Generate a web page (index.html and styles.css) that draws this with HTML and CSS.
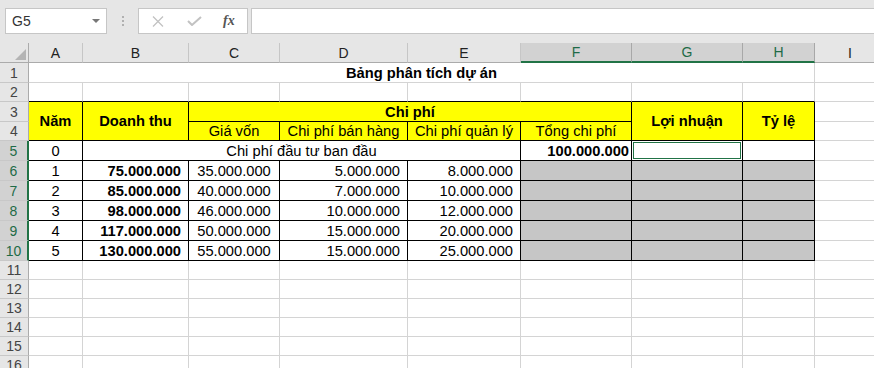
FILE: index.html
```html
<!DOCTYPE html>
<html lang="vi">
<head>
    <meta charset="UTF-8">
    <title>Bảng phân tích dự án</title>
    <link rel="stylesheet" href="styles.css">
</head>
<body>
    <div class="toolbar">
        <div class="namebox"><span>G5</span><span class="caret"></span></div>
        <div class="grip"><i></i><i></i><i></i></div>
        <div class="fxbtns">
            <svg class="icon" width="12" height="11" viewBox="0 0 12 11"><path d="M1 0.5L11 10.5M11 0.5L1 10.5" stroke="#c2c2c2" stroke-width="1.3" fill="none"/></svg>
            <svg class="icon" width="15" height="10" viewBox="0 0 15 10"><path d="M1 5L5 9L14 1" stroke="#c2c2c2" stroke-width="2" fill="none"/></svg>
            <span class="fx">fx</span>
        </div>
        <div class="formula"></div>
    </div>

    <div class="sheet">
        <!-- column headers -->
        <div class="c corner"><span class="tri"></span></div>
        <div class="c ch">A</div>
        <div class="c ch">B</div>
        <div class="c ch">C</div>
        <div class="c ch">D</div>
        <div class="c ch">E</div>
        <div class="c ch sel">F</div>
        <div class="c ch sel">G</div>
        <div class="c ch sel">H</div>
        <div class="c ch last">I</div>

        <!-- 1 -->
        <div class="c rh">1</div>
        <div class="c cs8 ctr b">Bảng phân tích dự án</div>
        <div class="c last"></div>

        <!-- 2 -->
        <div class="c rh">2</div>
        <div class="c kb"></div><div class="c kb"></div><div class="c kb"></div><div class="c kb"></div>
        <div class="c kb"></div><div class="c kb"></div><div class="c kb"></div><div class="c kb"></div>
        <div class="c last"></div>

        <!-- 3 -->
        <div class="c rh">3</div>
        <div class="c rs2 y k ctr b">Năm</div>
        <div class="c rs2 y k ctr b">Doanh thu</div>
        <div class="c cs4 y k ctr b">Chi phí</div>
        <div class="c rs2 y k ctr b">Lợi nhuận</div>
        <div class="c rs2 y k ctr b">Tỷ lệ</div>
        <div class="c last"></div>

        <!-- 4 -->
        <div class="c rh">4</div>
        <div class="c y k ctr">Giá vốn</div>
        <div class="c y k ctr">Chi phí bán hàng</div>
        <div class="c y k ctr">Chi phí quản lý</div>
        <div class="c y k ctr">Tổng chi phí</div>
        <div class="c last"></div>

        <!-- 5 -->
        <div class="c rh rsel">5</div>
        <div class="c k ctr">0</div>
        <div class="c cs4 k ctr">Chi phí đầu tư ban đầu</div>
        <div class="c k r tight b">100.000.000</div>
        <div class="c k active"></div>
        <div class="c k"></div>
        <div class="c last"></div>

        <!-- 6 -->
        <div class="c rh rsel">6</div>
        <div class="c k ctr">1</div>
        <div class="c k r b">75.000.000</div>
        <div class="c k ctr">35.000.000</div>
        <div class="c k r">5.000.000</div>
        <div class="c k r">8.000.000</div>
        <div class="c k g"></div><div class="c k g"></div><div class="c k g"></div>
        <div class="c last"></div>

        <!-- 7 -->
        <div class="c rh rsel">7</div>
        <div class="c k ctr">2</div>
        <div class="c k r b">85.000.000</div>
        <div class="c k ctr">40.000.000</div>
        <div class="c k r">7.000.000</div>
        <div class="c k r">10.000.000</div>
        <div class="c k g"></div><div class="c k g"></div><div class="c k g"></div>
        <div class="c last"></div>

        <!-- 8 -->
        <div class="c rh rsel">8</div>
        <div class="c k ctr">3</div>
        <div class="c k r b">98.000.000</div>
        <div class="c k ctr">46.000.000</div>
        <div class="c k r">10.000.000</div>
        <div class="c k r">12.000.000</div>
        <div class="c k g"></div><div class="c k g"></div><div class="c k g"></div>
        <div class="c last"></div>

        <!-- 9 -->
        <div class="c rh rsel">9</div>
        <div class="c k ctr">4</div>
        <div class="c k r b">117.000.000</div>
        <div class="c k ctr">50.000.000</div>
        <div class="c k r">15.000.000</div>
        <div class="c k r">20.000.000</div>
        <div class="c k g"></div><div class="c k g"></div><div class="c k g"></div>
        <div class="c last"></div>

        <!-- 10 -->
        <div class="c rh rsel">10</div>
        <div class="c k ctr">5</div>
        <div class="c k r b">130.000.000</div>
        <div class="c k ctr">55.000.000</div>
        <div class="c k r">15.000.000</div>
        <div class="c k r">25.000.000</div>
        <div class="c k g"></div><div class="c k g"></div><div class="c k g"></div>
        <div class="c last"></div>

        <!-- 11 - 16 -->
        <div class="c rh">11</div>
        <div class="c"></div><div class="c"></div><div class="c"></div><div class="c"></div>
        <div class="c"></div><div class="c"></div><div class="c"></div><div class="c"></div>
        <div class="c last"></div>

        <div class="c rh">12</div>
        <div class="c"></div><div class="c"></div><div class="c"></div><div class="c"></div>
        <div class="c"></div><div class="c"></div><div class="c"></div><div class="c"></div>
        <div class="c last"></div>

        <div class="c rh">13</div>
        <div class="c"></div><div class="c"></div><div class="c"></div><div class="c"></div>
        <div class="c"></div><div class="c"></div><div class="c"></div><div class="c"></div>
        <div class="c last"></div>

        <div class="c rh">14</div>
        <div class="c"></div><div class="c"></div><div class="c"></div><div class="c"></div>
        <div class="c"></div><div class="c"></div><div class="c"></div><div class="c"></div>
        <div class="c last"></div>

        <div class="c rh">15</div>
        <div class="c"></div><div class="c"></div><div class="c"></div><div class="c"></div>
        <div class="c"></div><div class="c"></div><div class="c"></div><div class="c"></div>
        <div class="c last"></div>

        <div class="c rh">16</div>
        <div class="c"></div><div class="c"></div><div class="c"></div><div class="c"></div>
        <div class="c"></div><div class="c"></div><div class="c"></div><div class="c"></div>
        <div class="c last"></div>
    </div>
</body>
</html>
```

FILE: styles.css
```css
* {
    box-sizing: border-box;
}
body {
    margin: 0;
    overflow: hidden;
    background: #fff;
    font-family: "Liberation Sans", Arial, sans-serif;
}

/* formula bar */
.toolbar {
    height: 43px;
    background: #e6e6e6;
    display: flex;
    align-items: flex-start;
    padding-top: 8px;
    padding-left: 5px;
}
.namebox {
    width: 102px;
    height: 26px;
    background: #fff;
    border: 1px solid #c6c6c6;
    display: flex;
    align-items: center;
    justify-content: space-between;
    padding: 0 6px 0 6px;
    font-size: 14px;
    color: #333;
}
.caret {
    width: 0;
    height: 0;
    border-left: 4px solid transparent;
    border-right: 4px solid transparent;
    border-top: 4px solid #777;
}
.grip {
    width: 31px;
    height: 26px;
    display: flex;
    flex-direction: column;
    align-items: center;
    justify-content: center;
    gap: 2px;
}
.grip i {
    width: 2px;
    height: 2px;
    background: #b0b0b0;
}
.fxbtns {
    width: 110px;
    height: 26px;
    background: #fff;
    border: 1px solid #c6c6c6;
    display: flex;
    align-items: center;
    padding-left: 13px;
}
.fxbtns .icon:nth-child(2) {
    margin-left: 23px;
}
.fx {
    margin-left: 21px;
    font-family: "Liberation Serif", serif;
    font-style: italic;
    font-weight: bold;
    font-size: 14px;
    color: #555;
}
.formula {
    flex: 1;
    height: 26px;
    margin-left: 3px;
    margin-right: -2px;
    background: #fff;
    border: 1px solid #c6c6c6;
}

/* grid */
.sheet {
    display: grid;
    grid-template-columns: 29px 54px 106px 91px 128px 113px 111px 111px 72px 70px;
    grid-template-rows: 20px 20px 19px 20px 19px 20px 20px 20px 20px 20px 20px 19px 19px 19px 19px 19px 19px;
    width: 885px;
}
.c {
    border-right: 1px solid #d4d4d4;
    border-bottom: 1px solid #d4d4d4;
    display: flex;
    align-items: center;
    padding: 0 4px;
    font-size: 14.7px;
    color: #000;
    white-space: nowrap;
    overflow: hidden;
}
.last {
    border-right: none;
}
.cs4 { grid-column: span 4; }
.cs8 { grid-column: span 8; }
.rs2 { grid-row: span 2; }

.ctr { justify-content: center; }
.r { justify-content: flex-end; padding-right: 7px; }
.r.tight { padding-right: 2px; }
.b { font-weight: bold; }
.y { background: #ffff00; }
.g { background: #c6c6c6; }
.k {
    border-right-color: #000;
    border-bottom-color: #000;
}
.kb {
    border-bottom-color: #000;
}
.active {
    box-shadow: inset 0 0 0 1px #fff, inset 0 0 0 2px #217346;
}

/* headers */
.corner {
    background: #e6e6e6;
    border-right: 1px solid #ababab;
    border-bottom: 1px solid #ababab;
    justify-content: flex-end;
    align-items: flex-end;
    padding: 0 2px 2px 0;
}
.tri {
    width: 0;
    height: 0;
    border-left: 11px solid transparent;
    border-bottom: 11px solid #b4b4b4;
}
.ch {
    background: #e6e6e6;
    border-right-color: #c6c6c6;
    border-bottom-color: #ababab;
    justify-content: center;
    font-size: 14px;
    color: #222;
}
.ch.sel {
    background: #d2d2d2;
    color: #1e6b47;
    border-right-color: #a8a8a8;
    border-bottom: 2px solid #217346;
}
.rh {
    background: #e6e6e6;
    border-right-color: #ababab;
    border-bottom-color: #c8c8c8;
    justify-content: center;
    font-size: 14px;
    color: #444;
    padding: 0;
}
.rh.rsel {
    background: #d2d2d2;
    color: #1e6b47;
    border-right: 2px solid #217346;
}
```
